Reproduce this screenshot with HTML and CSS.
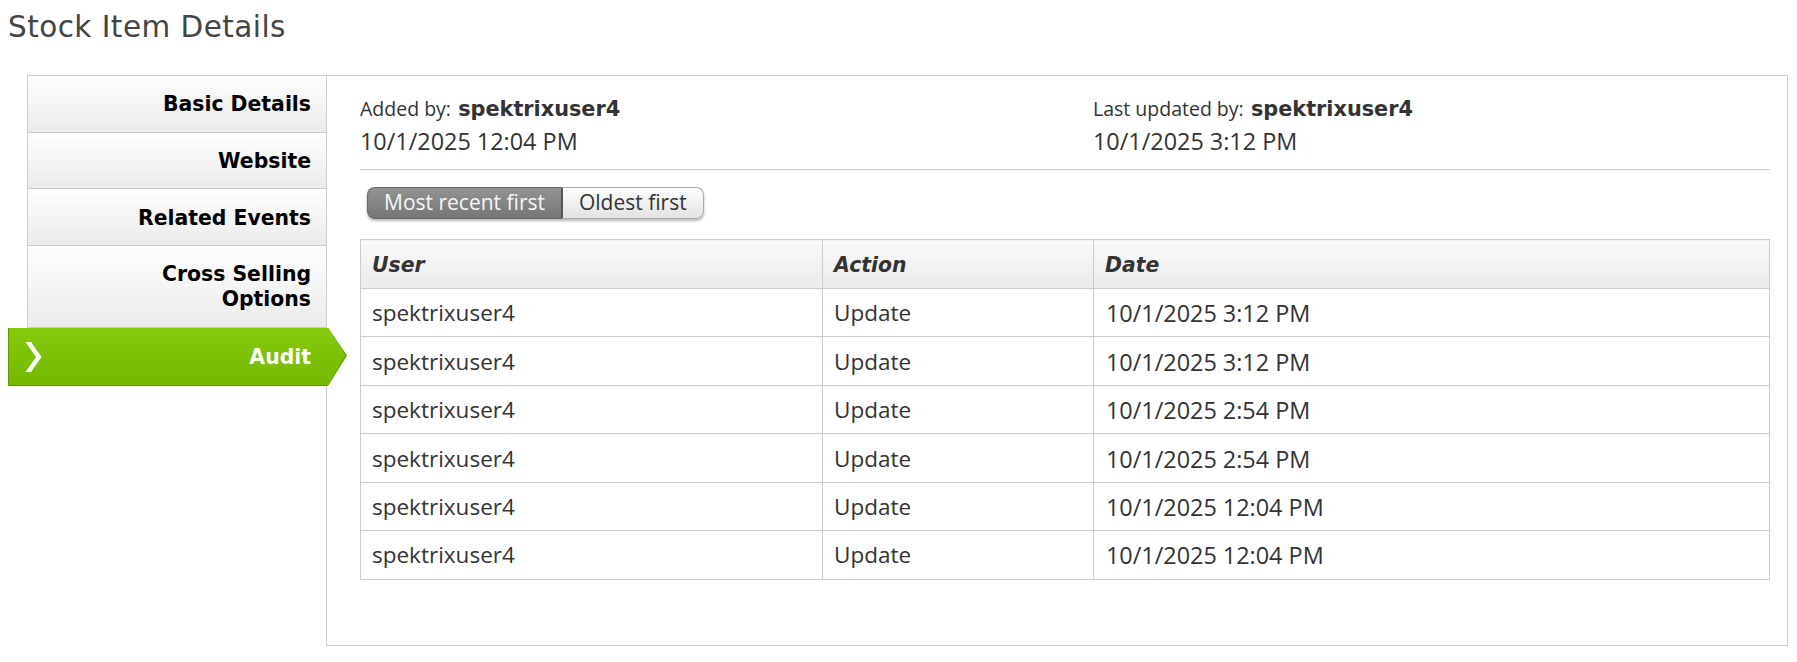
FILE: index.html
```html
<!DOCTYPE html>
<html lang="en">
<head>
<meta charset="utf-8">
<title>Stock Item Details</title>
<link rel="stylesheet" href="styles.css">
</head>
<body>
<h1 class="page-title">Stock Item Details</h1>
<div class="details">
  <nav class="tabs">
    <a class="tab" href="#">Basic Details</a>
    <a class="tab" href="#">Website</a>
    <a class="tab" href="#">Related Events</a>
    <a class="tab" href="#">Cross Selling<br>Options</a>
    <a class="tab tab-active" href="#"><svg class="chevron" width="17" height="30" viewBox="0 0 17 30" aria-hidden="true"><polygon points="0.5,0 6,0 16.5,15 6,30 0.5,30 11,15" fill="#fff"/></svg><span>Audit</span></a>
  </nav>
  <section class="content">
    <div class="meta">
      <div class="meta-col">
        <div class="meta-by">Added by:<b class="meta-user"> spektrixuser4</b></div>
        <div class="meta-date">10/1/2025 12:04 PM</div>
      </div>
      <div class="meta-col">
        <div class="meta-by">Last updated by:<b class="meta-user"> spektrixuser4</b></div>
        <div class="meta-date">10/1/2025 3:12 PM</div>
      </div>
    </div>
    <div class="sort">
      <button class="sort-btn sort-btn-active" type="button">Most recent first</button>
      <button class="sort-btn sort-btn-idle" type="button">Oldest first</button>
    </div>
    <table class="audit">
      <colgroup>
        <col class="col-user">
        <col class="col-action">
        <col class="col-date">
      </colgroup>
      <thead>
        <tr><th>User</th><th>Action</th><th>Date</th></tr>
      </thead>
      <tbody>
        <tr><td>spektrixuser4</td><td>Update</td><td class="cell-date">10/1/2025 3:12 PM</td></tr>
        <tr><td>spektrixuser4</td><td>Update</td><td class="cell-date">10/1/2025 3:12 PM</td></tr>
        <tr><td>spektrixuser4</td><td>Update</td><td class="cell-date">10/1/2025 2:54 PM</td></tr>
        <tr><td>spektrixuser4</td><td>Update</td><td class="cell-date">10/1/2025 2:54 PM</td></tr>
        <tr><td>spektrixuser4</td><td>Update</td><td class="cell-date">10/1/2025 12:04 PM</td></tr>
        <tr><td>spektrixuser4</td><td>Update</td><td class="cell-date">10/1/2025 12:04 PM</td></tr>
      </tbody>
    </table>
  </section>
</div>
</body>
</html>
```
FILE: styles.css
```css
* { box-sizing: border-box; }

body {
  margin: 0;
  background: #fff;
  font-family: "Open Sans", "Liberation Sans", sans-serif;
  color: #333;
}

.page-title {
  margin: 0;
  padding: 7px 0 0 8px;
  font: normal 29.5px/40px "DejaVu Sans", sans-serif;
  letter-spacing: 0.45px;
  color: #444;
}

.details {
  display: flex;
  align-items: flex-start;
  margin: 28px 9px 0 27px;
}

/* ---- side tabs ---- */
.tabs {
  flex: none;
  width: 299px;
  display: flex;
  flex-direction: column;
}

.tab {
  display: block;
  padding: 16.33px 15px 14.33px;
  border-left: 1px solid #ccc;
  border-bottom: 1px solid #ccc;
  background: linear-gradient(#fefefe, #ebebeb);
  font: bold 20.4px/25px "DejaVu Sans", sans-serif;
  color: #000;
  text-align: right;
  text-decoration: none;
}

.tab:first-child { border-top: 1px solid #ccc; }

.tab-active {
  position: relative;
  z-index: 1;
  display: flex;
  align-items: center;
  justify-content: space-between;
  margin: 0 -2px 0 -19px;
  padding: 14.5px 17px 12.8px 16px;
  border-left: 1px solid #5f9b00;
  border-bottom: 1px solid #5f9b00;
  background: linear-gradient(#86ca0e, #74b800);
  color: #fff;
}

.tab-active::before,
.tab-active::after {
  content: "";
  position: absolute;
  left: 100%;
  clip-path: polygon(0 0, 100% 48%, 0 100%);
}

.tab-active::after {
  top: 0;
  bottom: -1px;
  width: 19px;
  background: #5f9b00;
}

.tab-active::before {
  top: 0;
  bottom: 0;
  width: 17.5px;
  z-index: 1;
  background: linear-gradient(#86ca0e, #74b800);
}

.chevron { display: block; flex: none; }

/* ---- content panel ---- */
.content {
  flex: 1;
  min-width: 0;
  min-height: 571px;
  border: 1px solid #ccc;
  padding: 19px 17px 20px 33px;
  background: #fff;
}

.meta {
  display: grid;
  grid-template-columns: 733px 1fr;
  padding-bottom: 12px;
  border-bottom: 1px solid #ccc;
}

.meta-by {
  height: 28px;
  margin-bottom: 2px;
  font-size: 19.5px;
  line-height: 28px;
}

.meta-user {
  font: bold 20.8px/28px "DejaVu Sans", sans-serif;
  color: #333;
}

.meta-date {
  font-size: 23.4px;
  line-height: 32px;
}

/* ---- sort toggle ---- */
.sort {
  display: flex;
  width: max-content;
  margin: 17px 0 0 7px;
  border-radius: 8px;
  box-shadow: 0 2px 3px rgba(0, 0, 0, 0.28);
}

.sort-btn {
  height: 32px;
  margin: 0;
  padding: 0 16px 2px;
  font: 21px/28px "Open Sans", sans-serif;
  border: 1px solid #aaa;
  cursor: pointer;
}

.sort-btn-active {
  border-color: #666;
  border-right: 0;
  border-radius: 8px 0 0 8px;
  background: linear-gradient(#939393, #767676);
  color: #f6f6f6;
}

.sort-btn-idle {
  border-left: 2px solid #555;
  border-radius: 0 8px 8px 0;
  background: linear-gradient(#fff, #e2e2e2);
  color: #333;
}

/* ---- audit table ---- */
.audit {
  width: 100%;
  margin-top: 20px;
  border-collapse: collapse;
  table-layout: fixed;
}

.col-user { width: 462px; }
.col-action { width: 271px; }

.audit th,
.audit td {
  border: 1px solid #ccc;
  padding: 0 11px;
  text-align: left;
  vertical-align: middle;
}

.audit th {
  height: 49px;
  padding-top: 3px;
  background: linear-gradient(#fafafa, #ebebeb);
  font: italic bold 20.4px/25px "DejaVu Sans", sans-serif;
  color: #333;
}

.audit td {
  height: 48.45px;
  padding-top: 1px;
  font-size: 22.5px;
  line-height: 30px;
  color: #333;
}

.audit .cell-date {
  padding-left: 12px;
  font-size: 23.4px;
}
```
